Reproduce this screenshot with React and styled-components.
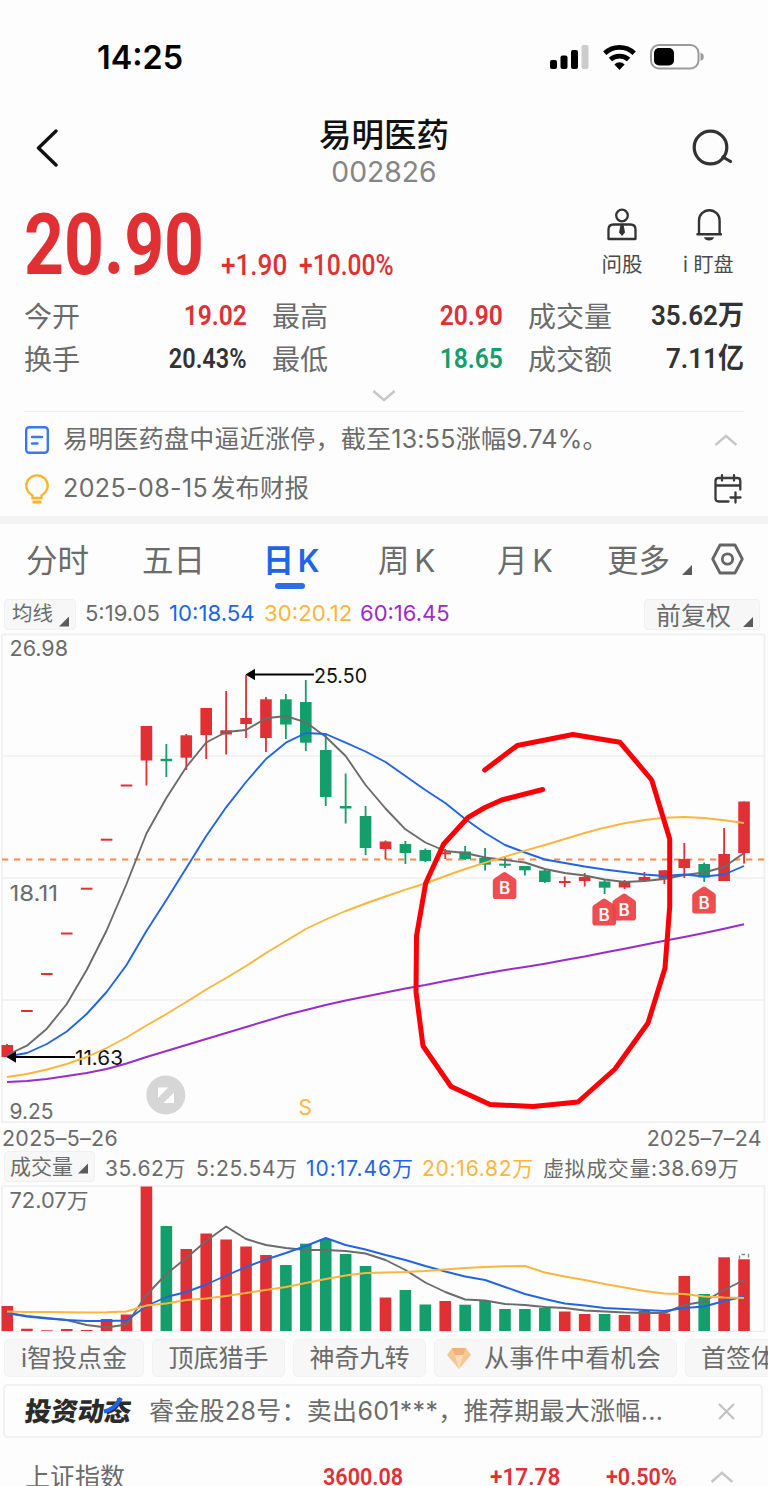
import styled, { createGlobalStyle } from 'styled-components';

const GlobalStyle = createGlobalStyle`
  * {
    box-sizing: border-box;
  }
  body {
    margin: 0;
    background: #fdfdfd;
  }
  svg {
    display: block;
    flex: none;
  }
`;

const RED = '#e03034';
const GREEN = '#139e6b';
const GRAY = '#6b6b6b';
const BLUE = '#2264e6';
const ORANGE = '#fdb53c';
const PURPLE = '#9a2bcc';

const Page = styled.div`
  width: 768px;
  height: 1486px;
  overflow: hidden;
  display: flex;
  flex-direction: column;
  background: #fdfdfd;
  color: #333;
  font-family: Inter, "Noto Sans CJK SC", sans-serif;
  white-space: nowrap;
`;

// text with a horizontal squeeze, for the narrow figures
const Text = styled.span`
  display: inline-block;
  font-family: ${props => props.$din ? 'Roboto, "Noto Sans CJK SC", sans-serif' : 'inherit'};
  font-size: ${props => props.$size}px;
  font-weight: ${props => props.$weight || 400};
  line-height: 1;
  letter-spacing: ${props => props.$ls || 0}px;
  color: ${props => props.$color || GRAY};
  transform: scaleX(${props => props.$sx || 1});
  transform-origin: ${props => props.$origin || 'left'} center;
`;

const StatusBar = styled.div`
  height: 114px;
  flex: none;
  display: flex;
  justify-content: space-between;
  align-items: center;
  padding: 0 64px 0 97px;
`;

const StatusIcons = styled.div`
  display: flex;
  align-items: center;
  gap: 14px;
`;

const NavBar = styled.div`
  height: 80px;
  flex: none;
  display: grid;
  grid-template-columns: 60px 1fr 60px;
  padding: 0 34px;
`;

const NavSide = styled.div`
  display: flex;
  align-items: center;
  height: 68px;
  justify-content: ${props => props.$right ? 'flex-end' : 'flex-start'};
`;

const NavTitle = styled.div`
  display: flex;
  flex-direction: column;
  align-items: center;
  padding-top: 6px;
  gap: 5px;
`;

const Quote = styled.div`
  height: 100px;
  flex: none;
  display: flex;
  padding: 0 24px;
`;

const Price = styled.div`
  width: 197px;
  padding-top: 8px;
`;

const Change = styled.div`
  width: 78px;
  padding-top: 57px;
`;

const Shortcuts = styled.div`
  margin-left: auto;
  display: flex;
`;

const Shortcut = styled.div`
  width: ${props => props.$w}px;
  display: flex;
  flex-direction: column;
  align-items: center;
  gap: 14px;
  padding-top: 14px;
`;

const Stats = styled.div`
  height: 87px;
  flex: none;
  display: grid;
  grid-template-columns: 223px 231px 216px;
  column-gap: 25px;
  grid-auto-rows: 43px;
  padding: 0 24px;
`;

const Stat = styled.div`
  display: flex;
  align-items: center;
  justify-content: space-between;
  & > :first-child {
    padding-top: 2px;
  }
`;

const Expand = styled.div`
  height: 31px;
  flex: none;
  margin: 0 24px;
  display: flex;
  justify-content: center;
  align-items: center;
  border-bottom: 1px solid #ececec;
`;

const Notice = styled.div`
  height: ${props => props.$h}px;
  flex: none;
  display: flex;
  align-items: center;
  padding: 0 ${props => props.$pr || 26}px 0 25px;
  gap: 14px;
  & > :last-child {
    margin-left: auto;
  }
`;

const Divider = styled.div`
  height: 8px;
  flex: none;
  margin-top: 6px;
  background: #f3f3f3;
`;

const Tabs = styled.div`
  height: 71px;
  flex: none;
  display: grid;
  grid-template-columns: 116px 121px 115px 119px 110px 104px 33px;
  padding: 0 24px 0 26px;
  word-spacing: -4px;
`;

const Tab = styled.div`
  display: flex;
  flex-direction: column;
  padding-top: ${props => props.$top || 21}px;
  gap: 6px;
`;

const Underline = styled.div`
  width: 30px;
  height: 6px;
  border-radius: 3px;
  margin-left: 12px;
  background: #2f6de6;
`;

const MoreTab = styled.div`
  display: flex;
  padding-top: 21px;
  gap: 12px;
`;

const Corner = styled.i`
  width: 10px;
  height: 10px;
  flex: none;
  margin-top: ${props => props.$top || 0}px;
  background: #5b5b5b;
  clip-path: polygon(100% 0, 100% 100%, 0 100%);
`;

const LegendRow = styled.div`
  height: ${props => props.$h}px;
  flex: none;
  display: flex;
  align-items: flex-start;
  padding: ${props => props.$top}px 8px 0 4px;
`;

const Picker = styled.div`
  width: ${props => props.$w}px;
  height: 31px;
  flex: none;
  display: flex;
  align-items: center;
  justify-content: space-between;
  padding: ${props => props.$pt || 0}px 6px 0 ${props => props.$pl || 7}px;
  margin-right: ${props => props.$mr || 0}px;
  border: 1px solid #f0f0f0;
  border-radius: 4px;
  background: #f7f7f7;
`;

const Legend = styled.div`
  width: ${props => props.$w}px;
  flex: none;
  padding-top: ${props => props.$top || 3}px;
`;

const Dates = styled.div`
  height: 26px;
  flex: none;
  display: flex;
  justify-content: space-between;
  align-items: center;
  padding: 1px 6px 0 2px;
`;

const Tools = styled.div`
  height: 52px;
  flex: none;
  display: flex;
  gap: 8px;
  padding: 7px 0 0 4px;
`;

const Tool = styled.div`
  width: ${props => props.$w}px;
  height: 38px;
  flex: none;
  display: flex;
  align-items: center;
  justify-content: ${props => props.$pl ? 'flex-start' : 'center'};
  padding-left: ${props => props.$pl || 0}px;
  gap: 13px;
  border: 1px solid #f1f1f1;
  border-radius: 5px;
  background: #f7f7f7;
`;

const NewsCard = styled.div`
  height: 54px;
  flex: none;
  margin: 0 5px 0 3px;
  display: flex;
  align-items: center;
  padding: 0 26px 0 19px;
  border: 2px solid #f1f1f1;
  border-radius: 5px;
`;

const CloseIcon = styled.svg`
  margin-left: auto;
`;

const NewsLogo = styled.div`
  position: relative;
  width: 125px;
  height: 30px;
  padding: 2px 0 0 1px;
`;

const LogoText = styled.span`
  display: inline-block;
  font-size: 26.5px;
  font-weight: 900;
  line-height: 1;
  color: #2b2b2b;
  transform: skewX(-7deg);
`;

const Swoosh = styled.svg`
  position: absolute;
  left: 79px;
  top: 1px;
`;

const IndexRow = styled.div`
  height: 78px;
  flex: none;
  display: grid;
  grid-template-columns: 298px 167px 116px 104px 24px;
  padding: 0 24px 0 25px;
  align-items: center;
`;

const BAR = 11.6;
const xAt = i => 7 + i * 19.92;

// body top, body bottom, high, low, 1 = rising
const CANDLES = [
  [1045, 1057, 1044, 1057, 1], [1010, 1012, 1010, 1012, 1], [973, 975, 973, 975, 1],
  [932.5, 934.5, 933, 934, 1], [887.7, 889.7, 888, 889, 1], [838.7, 840.7, 839, 840, 1],
  [784.5, 786.5, 785, 786, 1], [726, 760.5, 726, 785.5, 1], [758.8, 761.2, 744, 777, 0],
  [735.3, 757.7, 734, 770, 1], [708, 735, 708, 759, 1], [730.3, 734.5, 691, 754.5, 1],
  [718, 724, 675, 738, 1], [699.3, 738, 697, 752, 1], [699.3, 724.5, 694, 739, 0],
  [702, 742.7, 680, 751, 0], [750, 797, 733, 806, 0], [806, 808.5, 773.5, 823.5, 0],
  [816, 848, 806, 855, 0], [841.5, 849, 840.5, 859.5, 1], [844, 853, 841, 864, 0],
  [850, 861, 848.5, 862, 0], [852.3, 854.3, 849, 859, 1], [851.5, 859, 846, 860, 0],
  [858, 864.7, 848, 870.5, 0], [863.7, 865.7, 857, 868, 0], [866, 870.3, 866, 875.5, 0],
  [870.5, 882, 870, 883, 0], [881, 883, 876.5, 887, 1], [877, 881, 873, 886.5, 1],
  [881.5, 887.7, 880, 894, 0], [881, 887.5, 880, 889, 1], [877, 880.7, 872, 881, 1],
  [870.3, 879, 870, 884, 1], [859, 868, 843, 878, 1], [864, 877.5, 862.5, 882, 0],
  [854, 881, 828, 881, 1], [801.5, 853, 801.5, 863.5, 1],
];

const MA5 = [1055, 1045.7, 1028.7, 1004, 970, 930.5, 884, 833.5, 798, 767, 742.5, 732, 730, 718.3, 716, 722.3, 736.7, 756, 785, 808.5, 829.3, 842.5, 851, 853, 857.5, 860, 862.5, 869, 873, 875.5, 879.5, 882, 881, 879, 875, 872.5, 867, 853];
const MA10 = [1056.5, 1053, 1044, 1031.5, 1014, 992, 965, 931, 900, 868, 836, 807.3, 782, 759, 742.7, 733, 734, 742.7, 751.5, 762, 776, 790, 803, 819, 833, 845, 852.5, 859.5, 863, 866.5, 869.5, 872, 874.5, 876, 874.5, 876.5, 874.5, 866];
const MA30 = [1077, 1074, 1069.5, 1064, 1057, 1048, 1037.5, 1025.5, 1014, 1002, 989.5, 978, 966, 953, 941, 929, 919.5, 911, 903.5, 896.5, 889.7, 883.5, 876, 869, 862.7, 856.7, 850.7, 845, 839, 833, 827.7, 823.3, 820, 817.7, 817, 818, 820.3, 823];
const MA60 = [1082, 1081, 1079, 1076, 1073, 1069, 1063.5, 1057, 1051, 1045, 1039, 1033, 1027, 1021, 1015, 1010, 1005, 1000.5, 996.5, 992.5, 988.5, 985, 981, 977.3, 973.5, 970, 967, 963.7, 960, 956.5, 952.5, 948.7, 944.7, 940.7, 937, 933, 928.7, 924.3];

const VOLUMES = [1306, 1328.7, 1330.3, 1329, 1330, 1319, 1314.5, 1186.5, 1226, 1249, 1233.5, 1239.5, 1246.5, 1255, 1265, 1243.7, 1239, 1254, 1266, 1297.5, 1290, 1304.5, 1301, 1304.7, 1301, 1309, 1309, 1308, 1311.5, 1314, 1314, 1315, 1311, 1313.5, 1276, 1294, 1257.3, 1259.3];
const VOL5 = [1313, 1316, 1318, 1320, 1325, 1327.5, 1324.5, 1295, 1274, 1258, 1241, 1226.5, 1239, 1245, 1248, 1250, 1250, 1251, 1253.5, 1260, 1270, 1282.5, 1292, 1299.5, 1300.5, 1304, 1305, 1307, 1308, 1310.5, 1311.5, 1312.5, 1313, 1313, 1305, 1301.5, 1290, 1280];
const VOL10 = [1313, 1316.5, 1318.5, 1320, 1321, 1321, 1320.5, 1306, 1297, 1292, 1284.5, 1275.5, 1267, 1259.5, 1253, 1246, 1238, 1245, 1249.5, 1255, 1260, 1266, 1271.5, 1276.5, 1280, 1287, 1294, 1299, 1303.5, 1305.5, 1308, 1309, 1310, 1311, 1308, 1306.5, 1301, 1296.5];
const VOL20 = [1311.5, 1312, 1312, 1312.3, 1312.5, 1312.3, 1311.5, 1305.5, 1303.5, 1300, 1298.5, 1296, 1293, 1290, 1287, 1283, 1279, 1275.5, 1273, 1272.5, 1272, 1271, 1269.5, 1268, 1267, 1266.3, 1266, 1272.5, 1276.5, 1280, 1284, 1287.5, 1291, 1293.5, 1294, 1296.5, 1297.5, 1298];

const Line = ({ data, color }) => (
  <polyline
    points={data.map((y, i) => `${xAt(i)},${y}`).join(' ')}
    fill="none" stroke={color} strokeWidth="1.9" strokeLinejoin="round"
  />
);

const BuyMark = ({ x, y }) => (
  <g transform={`translate(${x} ${y})`}>
    <path
      d="M-1.5 .6Q0-.4 1.5 .6L10 6.2Q11.8 7.2 11.8 9V24.2Q11.8 27 9 27H-9Q-11.8 27-11.8 24.2V9Q-11.8 7.2-10 6.2Z"
      fill="#ec4449" fillOpacity=".95"
    />
    <text x="0" y="22" textAnchor="middle" fontSize="17" fontWeight="600" fill="#fff">B</text>
  </g>
);

const PriceChart = () => (
  <svg width="768" height="494" viewBox="0 631 768 494" fontFamily="Inter, sans-serif">
    <g fill="none" stroke="#efefef" strokeWidth="1.6">
      <rect x="2" y="634.5" width="762.5" height="487.5" />
      <path d="M2 756H764M2 878H764M2 1000H764" />
    </g>
    <g fontSize="21" fill={GRAY}>
      <text x="9.5" y="656" textLength="58.5" lengthAdjust="spacingAndGlyphs">26.98</text>
      <text x="9.5" y="900.5" textLength="48.5" lengthAdjust="spacingAndGlyphs">18.11</text>
      <text x="9.5" y="1118.5" textLength="44" lengthAdjust="spacingAndGlyphs">9.25</text>
    </g>
    <path d="M2 859.5H766" stroke="#f98a48" strokeWidth="2" strokeDasharray="6.3 5.7" />
    {CANDLES.map(([top, bottom, high, low, up], i) => (
      <g key={i} fill={up ? RED : GREEN}>
        <rect x={Math.max(1.5, xAt(i) - BAR / 2)} y={top} width={BAR} height={bottom - top} />
        <rect x={xAt(i) - 0.9} y={high} width="1.8" height={low - high} />
      </g>
    ))}
    <Line data={MA5} color={GRAY} />
    <Line data={MA10} color={BLUE} />
    <g stroke="#000" strokeWidth="2">
      <path d="M252 674.5H314M12 1057H75" />
      <path d="M245.5 674.5L255 668.8V680.2ZM6.5 1057L16 1051.3V1062.7Z" fill="#000" stroke="none" />
    </g>
    <g fontSize="20" fill="#111">
      <text x="314" y="682.5" textLength="53" lengthAdjust="spacingAndGlyphs">25.50</text>
      <text x="75" y="1065" textLength="48" lengthAdjust="spacingAndGlyphs">11.63</text>
    </g>
    <Line data={MA30} color={ORANGE} />
    <Line data={MA60} color={PURPLE} />
    <BuyMark x={504.6} y={872} />
    <BuyMark x={604.2} y={898.5} />
    <BuyMark x={624.2} y={893.5} />
    <BuyMark x={704} y={886.5} />
    <circle cx="165.8" cy="1095" r="19.5" fill="#d6d6d6" />
    <path d="M158 1087.5H168L158 1098ZM174 1092.5V1103H163.5Z" fill="#fff" />
    <text x="298.5" y="1115" fontSize="21" fill={ORANGE}>S</text>
    <polyline
      points="484.7,770 517.3,745.5 573,734.5 620,742.3 651.7,780 669.7,839 669.7,906.7 665,968 648,1023 615,1069 578,1102 533,1106.5 490,1104.5 451,1086.5 423,1046 416,992 416.5,936 425.7,883.3 443.5,844.3 467.7,817.7 485,807.5 501.7,800 542.7,789.5"
      fill="none" stroke="#fb0007" strokeWidth="5" strokeLinecap="round" strokeLinejoin="round"
    />
  </svg>
);

const VolumeChart = () => (
  <svg width="768" height="149" viewBox="0 1183 768 149" fontFamily='Inter, "Noto Sans CJK SC", sans-serif'>
    <rect x="2" y="1186" width="762.5" height="145.5" fill="none" stroke="#efefef" strokeWidth="1.6" />
    <text x="9.5" y="1208" fontSize="21" fill={GRAY} textLength="79" lengthAdjust="spacingAndGlyphs">72.07万</text>
    {VOLUMES.map((y, i) => (
      <rect key={i} x={Math.max(1.5, xAt(i) - BAR / 2)} y={y} width={BAR} height={1331 - y} fill={CANDLES[i][4] ? RED : GREEN} />
    ))}
    <path d="M739.5 1259V1254.5H748.5V1259" fill="none" stroke="#888" strokeWidth="1.3" strokeDasharray="3.5 3" />
    <Line data={VOL5} color={GRAY} />
    <Line data={VOL10} color={BLUE} />
    <Line data={VOL20} color={ORANGE} />
  </svg>
);

const Chevron = ({ up }) => (
  <svg width="24" height="12" viewBox="0 0 24 12" fill="none" stroke="#c6c6c6" strokeWidth="2.4">
    <path d={up ? 'M1.5 11L12 1.8L22.5 11' : 'M1.5 1L12 10.2L22.5 1'} />
  </svg>
);

const App = () => (
  <Page>
    <GlobalStyle />
    <StatusBar>
      <Text $size={33} $weight={600} $color="#000" $sx={0.98}>14:25</Text>
      <StatusIcons>
        <svg width="39" height="26" viewBox="0 0 39 26">
          <rect x="0" y="16" width="7" height="9" rx="2" />
          <rect x="10.5" y="11.5" width="7" height="13.5" rx="2" />
          <rect x="21" y="6" width="7" height="19" rx="2" />
          <rect x="31.5" y="1" width="7" height="24" rx="2" fill="#ccc" />
        </svg>
        <svg width="33" height="26" viewBox="0 0 33 26" fill="none" stroke="#000" strokeWidth="4.8">
          <path d="M1.8 9.2A21.5 21.5 0 0 1 31.2 9.2" />
          <path d="M7.4 15.6A13.4 13.4 0 0 1 25.6 15.6" />
          <path d="M16.5 26L11.4 20.4A7.2 7.2 0 0 1 21.6 20.4Z" fill="#000" stroke="none" />
        </svg>
        <svg width="54" height="26" viewBox="0 0 54 26">
          <rect x="1" y="1" width="47.5" height="23.5" rx="8" fill="none" stroke="#9b9b9b" strokeWidth="2" />
          <rect x="4" y="4" width="20" height="17.5" rx="5" />
          <path d="M50.5 8.5Q53.8 9.5 53.8 12.8T50.5 17Z" fill="#9b9b9b" />
        </svg>
      </StatusIcons>
    </StatusBar>

    <NavBar>
      <NavSide>
        <svg width="26" height="38" viewBox="0 0 26 38" fill="none" stroke="#111" strokeWidth="3.4" strokeLinecap="round" strokeLinejoin="round">
          <path d="M22 2L4.5 19L22 36" />
        </svg>
      </NavSide>
      <NavTitle>
        <Text $size={32.5} $weight={500} $color="#111">易明医药</Text>
        <Text $size={28.3} $color="#858585">002826</Text>
      </NavTitle>
      <NavSide $right>
        <svg width="42" height="38" viewBox="0 0 42 38" fill="none" stroke="#333" strokeWidth="3.2" strokeLinecap="round">
          <circle cx="18.5" cy="18.5" r="16.3" />
          <path d="M31 28L38.5 32.5" />
        </svg>
      </NavSide>
    </NavBar>

    <Quote>
      <Price><Text $din $size={86} $weight={700} $color={RED} $sx={0.81}>20.90</Text></Price>
      <Change><Text $din $size={29} $weight={500} $color={RED} $sx={0.9}>+1.90</Text></Change>
      <Change><Text $din $size={29} $weight={500} $color={RED} $sx={0.85}>+10.00%</Text></Change>
      <Shortcuts>
        <Shortcut $w={104}>
          <svg width="30" height="33" viewBox="0 0 30 33" fill="none" stroke="#333" strokeWidth="2.3">
            <circle cx="15" cy="7.5" r="5.8" />
            <path d="M1.5 31V21.5Q1.5 16.5 6.5 16.5H23.5Q28.5 16.5 28.5 21.5V31Z" strokeLinejoin="round" />
            <path d="M13.5 16.5H16.5L18 24.5L15 28L12 24.5Z" fill="#333" stroke="none" />
          </svg>
          <Text $size={20.5} $color="#4a4a4a">问股</Text>
        </Shortcut>
        <Shortcut $w={70}>
          <svg width="26" height="33" viewBox="0 0 26 33" fill="none" stroke="#333" strokeWidth="2.4">
            <path d="M3 26V12.5A10.3 10.3 0 0 1 23.6 12.5V26" />
            <path d="M1.5 26.2H25" strokeLinecap="round" />
            <path d="M8 29.3H18Q17 32.5 13 32.5T8 29.3Z" fill="#333" stroke="none" />
          </svg>
          <Text $size={20.5} $color="#4a4a4a" $sx={0.98}>i 盯盘</Text>
        </Shortcut>
      </Shortcuts>
    </Quote>

    <Stats>
      <Stat><Text $size={28}>今开</Text><Text $din $size={28} $weight={600} $color={RED} $sx={0.88} $origin="right">19.02</Text></Stat>
      <Stat><Text $size={28}>最高</Text><Text $din $size={28} $weight={600} $color={RED} $sx={0.88} $origin="right">20.90</Text></Stat>
      <Stat><Text $size={28}>成交量</Text><Text $din $size={28} $weight={600} $color="#333" $sx={0.93} $origin="right">35.62万</Text></Stat>
      <Stat><Text $size={28}>换手</Text><Text $din $size={28} $weight={600} $color="#333" $sx={0.84} $origin="right">20.43%</Text></Stat>
      <Stat><Text $size={28}>最低</Text><Text $din $size={28} $weight={600} $color={GREEN} $sx={0.88} $origin="right">18.65</Text></Stat>
      <Stat><Text $size={28}>成交额</Text><Text $din $size={28} $weight={600} $color="#333" $sx={0.93} $origin="right">7.11亿</Text></Stat>
    </Stats>
    <Expand><Chevron /></Expand>

    <Notice $h={55} $pr={30}>
      <svg width="24" height="28" viewBox="0 0 24 28" fill="none" stroke="#3b78ea" strokeWidth="2.4" strokeLinecap="round">
        <rect x="1.2" y="1.2" width="21.6" height="25.6" rx="3" />
        <path d="M7 11H17M7 17.5H12.5" />
      </svg>
      <Text $size={25} $ls={0.25}>易明医药盘中逼近涨停，截至13:55涨幅9.74%。</Text>
      <Chevron up />
    </Notice>
    <Notice $h={43}>
      <svg width="24" height="30" viewBox="0 0 24 30" fill="none" stroke="#fcb32c" strokeWidth="2.3">
        <path d="M7.5 24V21.5Q1.3 17.5 1.3 12A10.7 10.7 0 0 1 22.7 12Q22.7 17.5 16.5 21.5V24Z" />
        <path d="M7.5 28H16.5" strokeWidth="3" />
      </svg>
      <span>
        <Text $size={25} $ls={0.4}>2025-08-15</Text>
        <Text $size={24.5} style={{ marginLeft: 3 }}>发布财报</Text>
      </span>
      <svg width="28" height="30" viewBox="0 0 28 30" fill="none" stroke="#3a3a3a" strokeWidth="2.3" strokeLinecap="round">
        <path d="M14.5 27.5H4.5Q1.5 27.5 1.5 24.5V7Q1.5 4 4.5 4H23.5Q26.3 4 26.3 7V15.5M1.5 11.5H26.3M8 1.2V6.5M20 1.2V6.5M21.5 18.5V28.5M16.5 23.5H26.5" />
      </svg>
    </Notice>
    <Divider />

    <Tabs>
      <Tab><Text $size={31.5}>分时</Text></Tab>
      <Tab><Text $size={31.5}>五日</Text></Tab>
      <Tab>
        <Text $size={31.5} $weight={600} $color={BLUE} $sx={0.98}>日 K</Text>
        <Underline />
      </Tab>
      <Tab><Text $size={31.5}>周 K</Text></Tab>
      <Tab><Text $size={31.5} $sx={0.97}>月 K</Text></Tab>
      <MoreTab><Text $size={31.5}>更多</Text><Corner $top={20} /></MoreTab>
      <Tab $top={19}>
        <svg width="33" height="32" viewBox="0 0 33 32" fill="none" stroke="#666" strokeWidth="2.8" strokeLinejoin="round">
          <path d="M9 2H24L31.3 16L24 30H9L1.7 16Z" />
          <circle cx="16.5" cy="16" r="5.2" />
        </svg>
      </Tab>
    </Tabs>

    <LegendRow $h={36} $top={4}>
      <Picker $w={72} $mr={9}><Text $size={20.5}>均线</Text><Corner $top={14} /></Picker>
      <Legend $w={84}><Text $size={22}>5:19.05</Text></Legend>
      <Legend $w={95}><Text $size={22} $sx={1.01} $color={BLUE}>10:18.54</Text></Legend>
      <Legend $w={96}><Text $size={22} $sx={1.01} $color={ORANGE}>30:20.12</Text></Legend>
      <Legend $w={284}><Text $size={22} $color={PURPLE}>60:16.45</Text></Legend>
      <Picker $w={116} $pl={11} $pt={3}><Text $size={25}>前复权</Text><Corner $top={12} /></Picker>
    </LegendRow>

    <PriceChart />
    <Dates>
      <Text $size={21.4} $ls={0.3}>2025–5–26</Text>
      <Text $size={21.4} $ls={0.3}>2025–7–24</Text>
    </Dates>
    <LegendRow $h={32} $top={0}>
      <Picker $w={91} $pl={5} $mr={10}><Text $size={21}>成交量</Text><Corner $top={4} /></Picker>
      <Legend $w={91} $top={7}><Text $size={21} $ls={0.6}>35.62万</Text></Legend>
      <Legend $w={110} $top={7}><Text $size={21} $ls={0.6}>5:25.54万</Text></Legend>
      <Legend $w={116} $top={7}><Text $size={21} $ls={0.95} $color={BLUE}>10:17.46万</Text></Legend>
      <Legend $w={121} $top={7}><Text $size={21} $ls={0.75} $color={ORANGE}>20:16.82万</Text></Legend>
      <Legend $w={200} $top={7}><Text $size={21} $ls={0.6}>虚拟成交量:38.69万</Text></Legend>
    </LegendRow>
    <VolumeChart />

    <Tools>
      <Tool $w={140}><Text $size={25}>i智投点金</Text></Tool>
      <Tool $w={133}><Text $size={25}>顶底猎手</Text></Tool>
      <Tool $w={133}><Text $size={25}>神奇九转</Text></Tool>
      <Tool $w={243} $pl={12}>
        <svg width="24" height="21" viewBox="0 0 24 21">
          <path d="M5 0H19L24 7L12 21L0 7Z" fill="#f7c793" />
          <path d="M5 0H19L16 7H8Z" fill="#efb27a" />
          <path d="M8 7H16L12 21Z" fill="#fbdcb6" />
        </svg>
        <Text $size={25} $ls={0.3}>从事件中看机会</Text>
      </Tool>
      <Tool $w={120} $pl={15}><Text $size={25}>首签体验</Text></Tool>
    </Tools>

    <NewsCard>
      <NewsLogo>
        <LogoText>投资动态</LogoText>
        <Swoosh width="20" height="24" viewBox="0 0 20 24" fill="none" stroke="#2264e6" strokeWidth="4.2">
          <path d="M18 1Q11 13 1 14.5" />
        </Swoosh>
      </NewsLogo>
      <Text $size={25} $ls={0.3}>睿金股28号：卖出601***，推荐期最大涨幅...</Text>
      <CloseIcon width="17" height="17" viewBox="0 0 17 17" stroke="#c2c2c2" strokeWidth="2.2">
        <path d="M1 1L16 16M16 1L1 16" />
      </CloseIcon>
    </NewsCard>

    <IndexRow>
      <Text $size={25}>上证指数</Text>
      <Text $din $size={24.5} $weight={600} $color={RED} $sx={0.88}>3600.08</Text>
      <Text $din $size={24.5} $weight={600} $color={RED} $sx={0.92}>+17.78</Text>
      <Text $din $size={24.5} $weight={600} $color={RED} $sx={0.88}>+0.50%</Text>
      <Chevron up />
    </IndexRow>
  </Page>
);

export default App;
